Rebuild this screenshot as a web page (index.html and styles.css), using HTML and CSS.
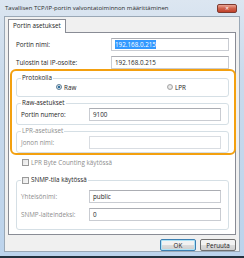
FILE: index.html
```html
<!DOCTYPE html>
<html>

<head>
    <title>Portin asetukset</title>
    <meta charset="utf-8">
    <meta name="viewport" content="width=device-width, initial-scale=1.0">
    <link rel="stylesheet" href="styles.css">
</head>

<body>
    <div class="window">
        <div class="titlebar">
            <span class="title">Tavallisen TCP/IP-portin valvontatoiminnon määrittäminen</span>
            <span class="close">✕</span>
        </div>

        <div class="client">
            <div class="tabs">
                <span class="tab">Portin asetukset</span>
            </div>

            <div class="panel">
                <div class="row">
                    <label>Portin nimi:</label>
                    <span class="field wide"><span class="sel">192.168.0.215</span></span>
                </div>
                <div class="row">
                    <label>Tulostin tai IP-osoite:</label>
                    <span class="field wide">192.168.0.215</span>
                </div>

                <!-- korostus -->
                <div class="mark"></div>

                <fieldset class="group proto">
                    <legend>Protokolla</legend>
                    <div class="radios">
                        <span class="opt"><span class="radio on"></span>Raw</span>
                        <span class="opt"><span class="radio"></span>LPR</span>
                    </div>
                </fieldset>

                <fieldset class="group">
                    <legend>Raw-asetukset</legend>
                    <div class="row inner">
                        <label>Portin numero:</label>
                        <span class="field">9100</span>
                    </div>
                </fieldset>

                <fieldset class="group">
                    <legend class="off">LPR-asetukset</legend>
                    <div class="row inner">
                        <label class="off">Jonon nimi:</label>
                        <span class="field disabled"></span>
                    </div>
                </fieldset>

                <div class="check">
                    <span class="box"></span><span class="off">LPR Byte Counting käytössä</span>
                </div>

                <fieldset class="group snmp">
                    <legend><span class="box"></span>SNMP-tila käytössä</legend>
                    <div class="row inner">
                        <label class="off">Yhteisönimi:</label>
                        <span class="field">public</span>
                    </div>
                    <div class="row inner">
                        <label class="off">SNMP-laiteindeksi:</label>
                        <span class="field">0</span>
                    </div>
                </fieldset>
            </div>

            <div class="buttons">
                <button class="btn default">OK</button>
                <button class="btn">Peruuta</button>
            </div>
        </div>
    </div>
</body>

</html>
```

FILE: styles.css
```css
* {
    box-sizing: border-box;
}

body {
    margin: 0;
    width: 244px;
    height: 258px;
    overflow: hidden;
    font-family: "Open Sans", "Noto Sans", sans-serif;
    font-size: 6.3px;
    color: #1e1e1e;
    background: #c4d6ec;
}

.window {
    height: 258px;
    display: flex;
    flex-direction: column;
    background: linear-gradient(#dce6f1, #c9daec 30%, #bcd3ec);
    border-bottom: 2px solid #23313e;
}

.titlebar {
    height: 17px;
    display: flex;
    align-items: center;
    padding: 0 7px 0 5px;
}

.title {
    flex: 1;
    color: #2a2a2a;
    font-size: 6px;
}

.close {
    width: 20px;
    height: 9px;
    border: 1px solid #7d3a30;
    border-radius: 2px;
    background: linear-gradient(#e9a595, #d0624c 50%, #c0402a);
    color: #fff;
    font-size: 5px;
    line-height: 7px;
    text-align: center;
}

.client {
    flex: 1;
    margin: 0 4px 4px;
    padding: 2px 3px 0;
    background: #f0f0f0;
    border: 1px solid #9aa8b6;
    display: flex;
    flex-direction: column;
}

.tabs {
    display: flex;
    height: 13px;
}

.tab {
    position: relative;
    z-index: 1;
    height: 14px;
    padding: 0 4px;
    line-height: 12px;
    background: #fff;
    border: 1px solid #898c95;
    border-bottom: none;
}

.panel {
    position: relative;
    height: 203px;
    background: #fff;
    border: 1px solid #898c95;
    padding: 5px 6px 0 7px;
}

.row {
    display: flex;
    align-items: center;
    height: 13px;
    margin-bottom: 5px;
}

.row label {
    flex: 1;
}

.field {
    width: 132px;
    height: 13px;
    padding: 0 3px;
    line-height: 11px;
    border: 1px solid #c9ccd2;
    border-top-color: #abadb3;
    background: #fff;
}

.field.wide {
    width: 118px;
}

.field.disabled {
    border-color: #d9dde2;
}

.sel {
    background: #3399ff;
    color: #fff;
}

.off {
    color: #8d8d8d;
}

.mark {
    position: absolute;
    left: 1px;
    top: 36px;
    width: 226px;
    height: 86px;
    border: 2px solid #f3a00f;
    border-radius: 6px;
    pointer-events: none;
}

.group {
    margin: 2px 0 0;
    padding: 1px 7px 3px 4px;
    border: 1px solid #d5dfe5;
    border-radius: 3px;
}

.group legend {
    padding: 0 1px;
    line-height: 8px;
}

.group .row.inner {
    margin-bottom: 0;
}

.proto {
    padding-bottom: 5px;
}

.radios {
    display: flex;
    height: 8px;
    align-items: center;
}

.opt {
    display: flex;
    align-items: center;
    gap: 2px;
}

.opt:first-child {
    margin-left: 35px;
    width: 111px;
}

.radio {
    width: 6px;
    height: 6px;
    border-radius: 50%;
    border: 1px solid #a7a7a7;
    background: radial-gradient(#f4f4f4, #d2d2d2);
}

.radio.on {
    border-color: #5f7f97;
    background: radial-gradient(#2e6f9e 35%, #cfdbe4 45%);
}

.check {
    display: flex;
    align-items: center;
    gap: 2px;
    height: 9px;
    margin: 5px 0 0 6px;
}

.box {
    display: inline-block;
    width: 7px;
    height: 7px;
    border: 1px solid #9a9a9a;
    background: linear-gradient(135deg, #e4e4e4, #f8f8f8);
    vertical-align: middle;
}

.snmp {
    margin-top: 9px;
    padding-bottom: 8px;
}

.snmp legend {
    display: flex;
    align-items: center;
    gap: 2px;
}

.snmp .row.inner {
    margin-top: 5px;
}

.buttons {
    display: flex;
    justify-content: flex-end;
    gap: 4px;
    margin-top: 4px;
}

.btn {
    width: 36px;
    height: 12px;
    padding: 0;
    font-family: inherit;
    font-size: 6.3px;
    color: #1e1e1e;
    border: 1px solid #707070;
    border-radius: 2px;
    background: linear-gradient(#f2f2f2 50%, #dcdcdc 50%, #cfcfcf);
}

.btn.default {
    border-color: #3c7fb1;
    box-shadow: inset 0 0 0 1px #aee3f7;
}
```
